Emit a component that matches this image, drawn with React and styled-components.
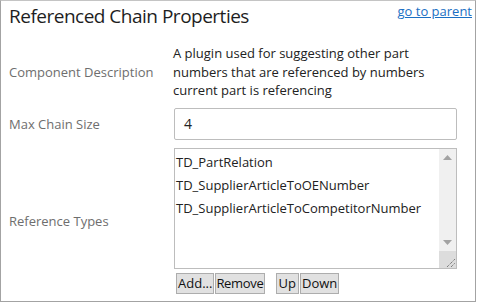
import React from "react";
import styled, { createGlobalStyle } from "styled-components";

const Global = createGlobalStyle`
  html, body { margin: 0; padding: 0; background: #fff; }
  body { font-family: "Open Sans", "Noto Sans", sans-serif; }
`;

const Panel = styled.div`
  box-sizing: border-box;
  width: 476px;
  height: 302px;
  border: 1px solid #a3a3a3;
  border-top-color: #c4c4c4;
  padding: 0 18px 0 8px;
  display: flex;
  flex-direction: column;
`;

const Header = styled.div`
  display: flex;
  justify-content: space-between;
  align-items: flex-start;
  height: 43px;
`;

const Title = styled.h1`
  margin: 0;
  font-size: 19px;
  letter-spacing: -0.5px;
  font-weight: 400;
  color: #1e1e1e;
  line-height: 31px;
`;

const ParentLink = styled.a`
  font-size: 13px;
  color: #1a6fc4;
  text-decoration: underline;
  line-height: 20px;
  margin-right: -15px;
  cursor: pointer;
`;

const Form = styled.div`
  display: grid;
  grid-template-columns: 164px 1fr;
  row-gap: 8px;
`;

const Label = styled.div`
  font-size: 13px;
  color: #6e6e6e;
  display: flex;
  align-items: center;
`;

const Description = styled.div`
  font-size: 13px;
  line-height: 18.5px;
  color: #222;
`;

const TextInput = styled.div`
  box-sizing: border-box;
  height: 32px;
  border: 1px solid #bdbdbd;
  border-radius: 2px;
  margin-left: 1px;
  padding-left: 9px;
  display: flex;
  align-items: center;
  font-size: 14px;
  color: #222;
`;

const ListCell = styled.div`
  display: flex;
  flex-direction: column;
  gap: 4px;
  margin-left: 1px;
`;

const ListBox = styled.div`
  box-sizing: border-box;
  height: 121px;
  border: 1px solid #bdbdbd;
  display: flex;
`;

const Items = styled.div`
  flex: 1;
  padding-top: 2px;
`;

const Item = styled.div`
  font-size: 13px;
  line-height: 23px;
  color: #222;
  padding-left: 1px;
`;

const Scrollbar = styled.div`
  width: 17px;
  background: #f0f0f0;
  display: flex;
  flex-direction: column;
  align-items: center;
`;

const Track = styled.div`
  flex: 1;
`;

const Arrow = styled.div`
  width: 17px;
  height: 17px;
  display: flex;
  align-items: center;
  justify-content: center;
`;

const Grip = styled.div`
  width: 17px;
  height: 17px;
  background: #dcdcdc;
  display: flex;
  align-items: flex-end;
  justify-content: flex-end;
`;

const Buttons = styled.div`
  display: flex;
  gap: 1px;
  margin-left: 2px;
`;

const Button = styled.button`
  box-sizing: border-box;
  height: 21px;
  padding: 0 ${(p) => p.$pad || "1px"};
  margin-left: ${(p) => (p.$gap ? "10px" : "0")};
  border: 1px solid #adadad;
  background: #e1e1e1;
  font-family: inherit;
  font-size: 13px;
  letter-spacing: ${(p) => (p.$tight ? "-0.3px" : "0")};
  color: #111;
  line-height: 19px;
`;

export default function App() {
  return (
    <>
      <Global />
      <Panel>
        <Header>
          <Title>Referenced Chain Properties</Title>
          <ParentLink>go to parent</ParentLink>
        </Header>
        <Form>
          <Label>Component Description</Label>
          <Description>
            A plugin used for suggesting other part numbers that are referenced by numbers current part is referencing
          </Description>
          <Label>Max Chain Size</Label>
          <TextInput>4</TextInput>
          <Label>Reference Types</Label>
          <ListCell>
            <ListBox>
              <Items>
                <Item>TD_PartRelation</Item>
                <Item>TD_SupplierArticleToOENumber</Item>
                <Item>TD_SupplierArticleToCompetitorNumber</Item>
              </Items>
              <Scrollbar>
                <Arrow>
                  <svg width="9" height="5" viewBox="0 0 9 5"><path d="M0 5 L4.5 0 L9 5 Z" fill="#a3a3a3" /></svg>
                </Arrow>
                <Track />
                <Arrow>
                  <svg width="9" height="5" viewBox="0 0 9 5"><path d="M0 0 L4.5 5 L9 0 Z" fill="#a3a3a3" /></svg>
                </Arrow>
                <Grip>
                  <svg width="12" height="12" viewBox="0 0 12 12">
                    <path d="M3 11 L11 3 M7 11 L11 7" stroke="#555" strokeWidth="1" strokeDasharray="1 1" />
                  </svg>
                </Grip>
              </Scrollbar>
            </ListBox>
            <Buttons>
              <Button>Add...</Button>
              <Button $pad="0px" $tight>Remove</Button>
              <Button $gap $pad="2px">Up</Button>
              <Button>Down</Button>
            </Buttons>
          </ListCell>
        </Form>
      </Panel>
    </>
  );
}
